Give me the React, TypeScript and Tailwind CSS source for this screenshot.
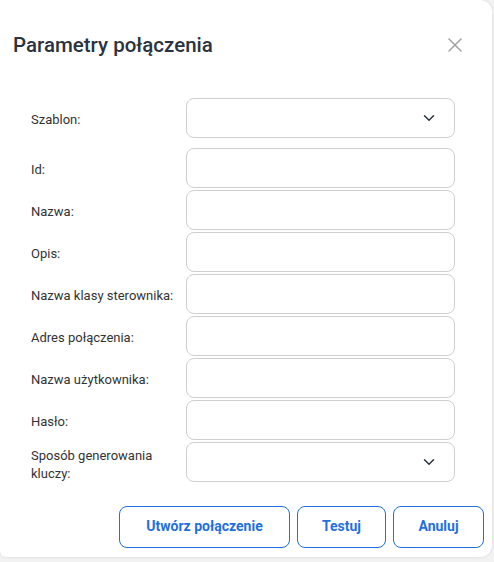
import { ChevronDown, X } from 'lucide-react'

type Field = { label: string; select?: boolean }

const fields: Field[] = [
  { label: 'Id:' },
  { label: 'Nazwa:' },
  { label: 'Opis:' },
  { label: 'Nazwa klasy sterownika:' },
  { label: 'Adres połączenia:' },
  { label: 'Nazwa użytkownika:' },
  { label: 'Hasło:' },
  { label: 'Sposób generowania kluczy:', select: true },
]

function Row({ label, select }: Field) {
  return (
    <div className="flex items-center">
      <label className="w-[155px] pr-2 pt-[5px] text-[13px] leading-[18px] text-[#333]">{label}</label>
      <div className="relative flex h-10 w-[269px] items-center rounded-lg border border-[#cfcfcf] bg-white">
        {select && (
          <ChevronDown className="absolute right-[16px] h-[18px] w-[18px] text-[#2d3340]" strokeWidth={2} />
        )}
      </div>
    </div>
  )
}

export default function App() {
  return (
    <div className="h-[562px] w-[494px] bg-[#f2f2f2] font-['Roboto',sans-serif]">
      <div className="flex h-[557px] w-[492px] flex-col rounded-r-xl rounded-bl-md bg-white shadow-[0_0_3px_rgba(0,0,0,0.12)]">
        <header className="flex items-center justify-between pl-[13px] pr-[25px] pt-[30px]">
          <h2 className="text-[20.5px] font-medium text-[#2b3340]">Parametry połączenia</h2>
          <X className="h-[24px] w-[24px] text-[#9e9e9e]" strokeWidth={1.4} />
        </header>

        <div className="mt-[37px] flex flex-col pl-[31px]">
          <Row label="Szablon:" select />
          <div className="mt-[10px] flex flex-col gap-[2px]">
            {fields.map((f) => (
              <Row key={f.label} {...f} />
            ))}
          </div>
        </div>

        <footer className="mt-[23px] flex justify-end gap-[7px] pr-[8px]">
          <button className="h-[42px] w-[171px] rounded-lg border border-[#1f6fde] text-[14px] font-bold text-[#1f6fde]">
            Utwórz połączenie
          </button>
          <button className="h-[42px] w-[89px] rounded-lg border border-[#1f6fde] text-[14px] font-bold text-[#1f6fde]">
            Testuj
          </button>
          <button className="h-[42px] w-[91px] rounded-lg border border-[#1f6fde] text-[14px] font-bold text-[#1f6fde]">
            Anuluj
          </button>
        </footer>
      </div>
    </div>
  )
}
